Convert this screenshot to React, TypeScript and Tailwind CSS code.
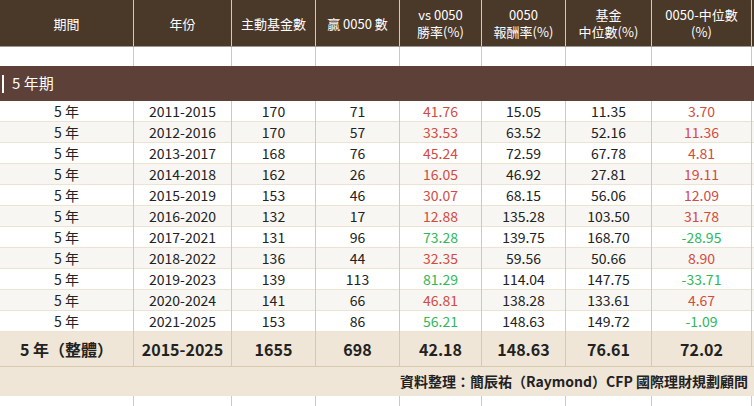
import React from 'react';

const rows: [string, string, string, string, string, string, string, string][] = [
  ['2011-2015', '170', '71', '41.76', '15.05', '11.35', '3.70', 'r'],
  ['2012-2016', '170', '57', '33.53', '63.52', '52.16', '11.36', 'r'],
  ['2013-2017', '168', '76', '45.24', '72.59', '67.78', '4.81', 'r'],
  ['2014-2018', '162', '26', '16.05', '46.92', '27.81', '19.11', 'r'],
  ['2015-2019', '153', '46', '30.07', '68.15', '56.06', '12.09', 'r'],
  ['2016-2020', '132', '17', '12.88', '135.28', '103.50', '31.78', 'r'],
  ['2017-2021', '131', '96', '73.28', '139.75', '168.70', '-28.95', 'g'],
  ['2018-2022', '136', '44', '32.35', '59.56', '50.66', '8.90', 'r'],
  ['2019-2023', '139', '113', '81.29', '114.04', '147.75', '-33.71', 'g'],
  ['2020-2024', '141', '66', '46.81', '138.28', '133.61', '4.67', 'r'],
  ['2021-2025', '153', '86', '56.21', '148.63', '149.72', '-1.09', 'g'],
];

const cols = 'grid grid-cols-[134px_98px_84px_84px_82px_84px_86px_100px]';
const cell = 'border-r border-[#d9c9aa] flex items-center justify-center';

export default function App() {
  return (
    <div className="w-[754px] h-[406px] bg-white text-[#222] overflow-hidden" style={{ fontFamily: '"Noto Sans CJK TC", "Noto Sans", sans-serif' }}>
      <div className={`${cols} h-[46px] bg-[#4a3829] text-white text-[13px] leading-[17px] text-center`}>
        {['期間', '年份', '主動基金數', '贏 0050 數', 'vs 0050\n勝率(%)', '0050\n報酬率(%)', '基金\n中位數(%)', '0050-中位數\n(%)'].map((h) => (
          <div key={h} className={`${cell} whitespace-pre-line`}>{h}</div>
        ))}
      </div>
      <div className={`${cols} h-[20px] border-t border-[#999]`}>
        {Array.from({ length: 8 }).map((_, i) => <div key={i} className={cell} />)}
      </div>
      <div className="h-[35px] bg-[#5d4037] text-white text-[15px] flex items-center pl-[2px]">
        <span className="w-[2px] h-[18px] bg-white mr-[8px]" />5 年期
      </div>
      {rows.map((r, i) => (
        <div key={r[0]} className={`${cols} h-[21px] text-[14px] border-b border-[#ece3d3] ${i % 2 ? 'bg-[#f8f6f2]' : 'bg-white'}`}>
          <div className={cell}>5 年</div>
          <div className={cell}>{r[0]}</div>
          <div className={cell}>{r[1]}</div>
          <div className={cell}>{r[2]}</div>
          <div className={`${cell} ${Number(r[3]) > 50 ? 'text-[#2fb85a]' : 'text-[#d24b3f]'}`}>{r[3]}</div>
          <div className={cell}>{r[4]}</div>
          <div className={cell}>{r[5]}</div>
          <div className={`${cell} ${r[7] === 'g' ? 'text-[#2fb85a]' : 'text-[#d24b3f]'}`}>{r[6]}</div>
        </div>
      ))}
      <div className={`${cols} h-[34px] bg-[#efe6d8] text-[16px] font-bold`}>
        {['5 年（整體）', '2015-2025', '1655', '698', '42.18', '148.63', '76.61', '72.02'].map((t) => (
          <div key={t} className={cell}>{t}</div>
        ))}
      </div>
      <div className="h-[30px] bg-[#efe6d8] border-t border-[#d9c9aa] flex items-center justify-end pr-[6px] text-[14px] font-bold">
        資料整理：簡辰祐（Raymond）CFP 國際理財規劃顧問
      </div>
      <div className={`${cols} h-[10px]`}>
        {Array.from({ length: 8 }).map((_, i) => <div key={i} className={cell} />)}
      </div>
    </div>
  );
}
